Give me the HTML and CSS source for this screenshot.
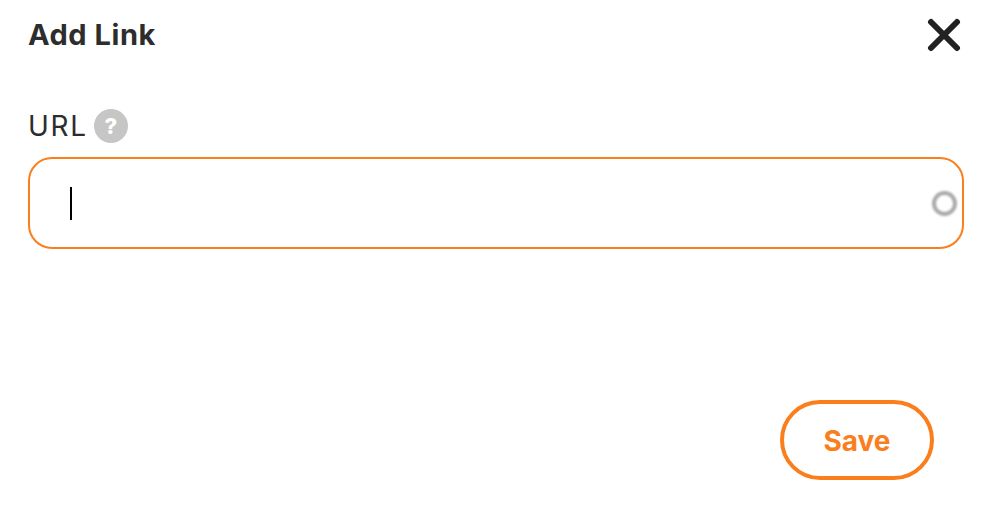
FILE: index.html
```html
<!DOCTYPE html>
<html lang="en">
<head>
    <meta charset="UTF-8">
    <title>Add Link</title>
    <link rel="stylesheet" href="styles.css">
</head>
<body>
    <div class="dialog">
        <div class="dialog-header">
            <h2>Add Link</h2>
            <button class="close-btn" aria-label="Close">
                <svg width="34" height="34" viewBox="0 0 34 34">
                    <path d="M4 4L30 30M30 4L4 30" fill="none" stroke="#222222" stroke-width="6" stroke-linecap="round"/>
                </svg>
            </button>
        </div>

        <div class="label-row">
            <label>URL</label>
            <span class="help-icon">?</span>
        </div>

        <div class="url-field">
            <span class="caret"></span>
            <span class="spinner"></span>
        </div>

        <div class="dialog-footer">
            <button class="save-btn">Save</button>
        </div>
    </div>
</body>
</html>
```

FILE: styles.css
```css
:root {
    --text-color: #2d2d2d;
    --primary-color: #fb7e1d;
}

* {
    box-sizing: border-box;
}

body {
    margin: 0;
    background-color: #ffffff;
    color: var(--text-color);
    font-family: Inter, "Liberation Sans", sans-serif;
}

.dialog {
    width: 988px;
    height: 508px;
    padding: 18px 24px 28px 28px;
    display: flex;
    flex-direction: column;
}

.dialog-header {
    display: flex;
    justify-content: space-between;
    align-items: center;
    height: 34px;
    padding-right: 3px;
}

.dialog-header h2 {
    margin: 0;
    font-size: 29px;
    font-weight: 700;
    letter-spacing: 0.55px;
    line-height: 34px;
}

.close-btn {
    width: 34px;
    height: 34px;
    padding: 0;
    border: none;
    background: none;
}

.close-btn svg {
    display: block;
}

.label-row {
    display: flex;
    align-items: center;
    gap: 6px;
    height: 36px;
    margin-top: 56px;
}

.label-row label {
    font-size: 28px;
    font-weight: 400;
    letter-spacing: 1.7px;
    line-height: 36px;
}

.help-icon {
    width: 34px;
    height: 34px;
    border-radius: 50%;
    background: #c6c6c6;
    color: #ffffff;
    font-size: 22px;
    font-weight: 800;
    line-height: 34px;
    text-align: center;
}

.url-field {
    display: flex;
    align-items: center;
    justify-content: space-between;
    height: 92px;
    margin-top: 13px;
    padding: 0 5px 0 40px;
    border: 2px solid var(--primary-color);
    border-radius: 24px;
}

.caret {
    width: 2px;
    height: 33px;
    background: #000000;
}

.spinner {
    width: 25px;
    height: 25px;
    border: 4px solid #a9a9a9;
    border-radius: 50%;
    filter: blur(1px);
}

.dialog-footer {
    display: flex;
    justify-content: flex-end;
    margin-top: 151px;
    padding-right: 30px;
}

.save-btn {
    width: 154px;
    height: 80px;
    padding: 2px 0 0;
    border: 4px solid var(--primary-color);
    border-radius: 40px;
    background: #ffffff;
    color: var(--primary-color);
    font-family: inherit;
    font-size: 28px;
    font-weight: 700;
}
```
